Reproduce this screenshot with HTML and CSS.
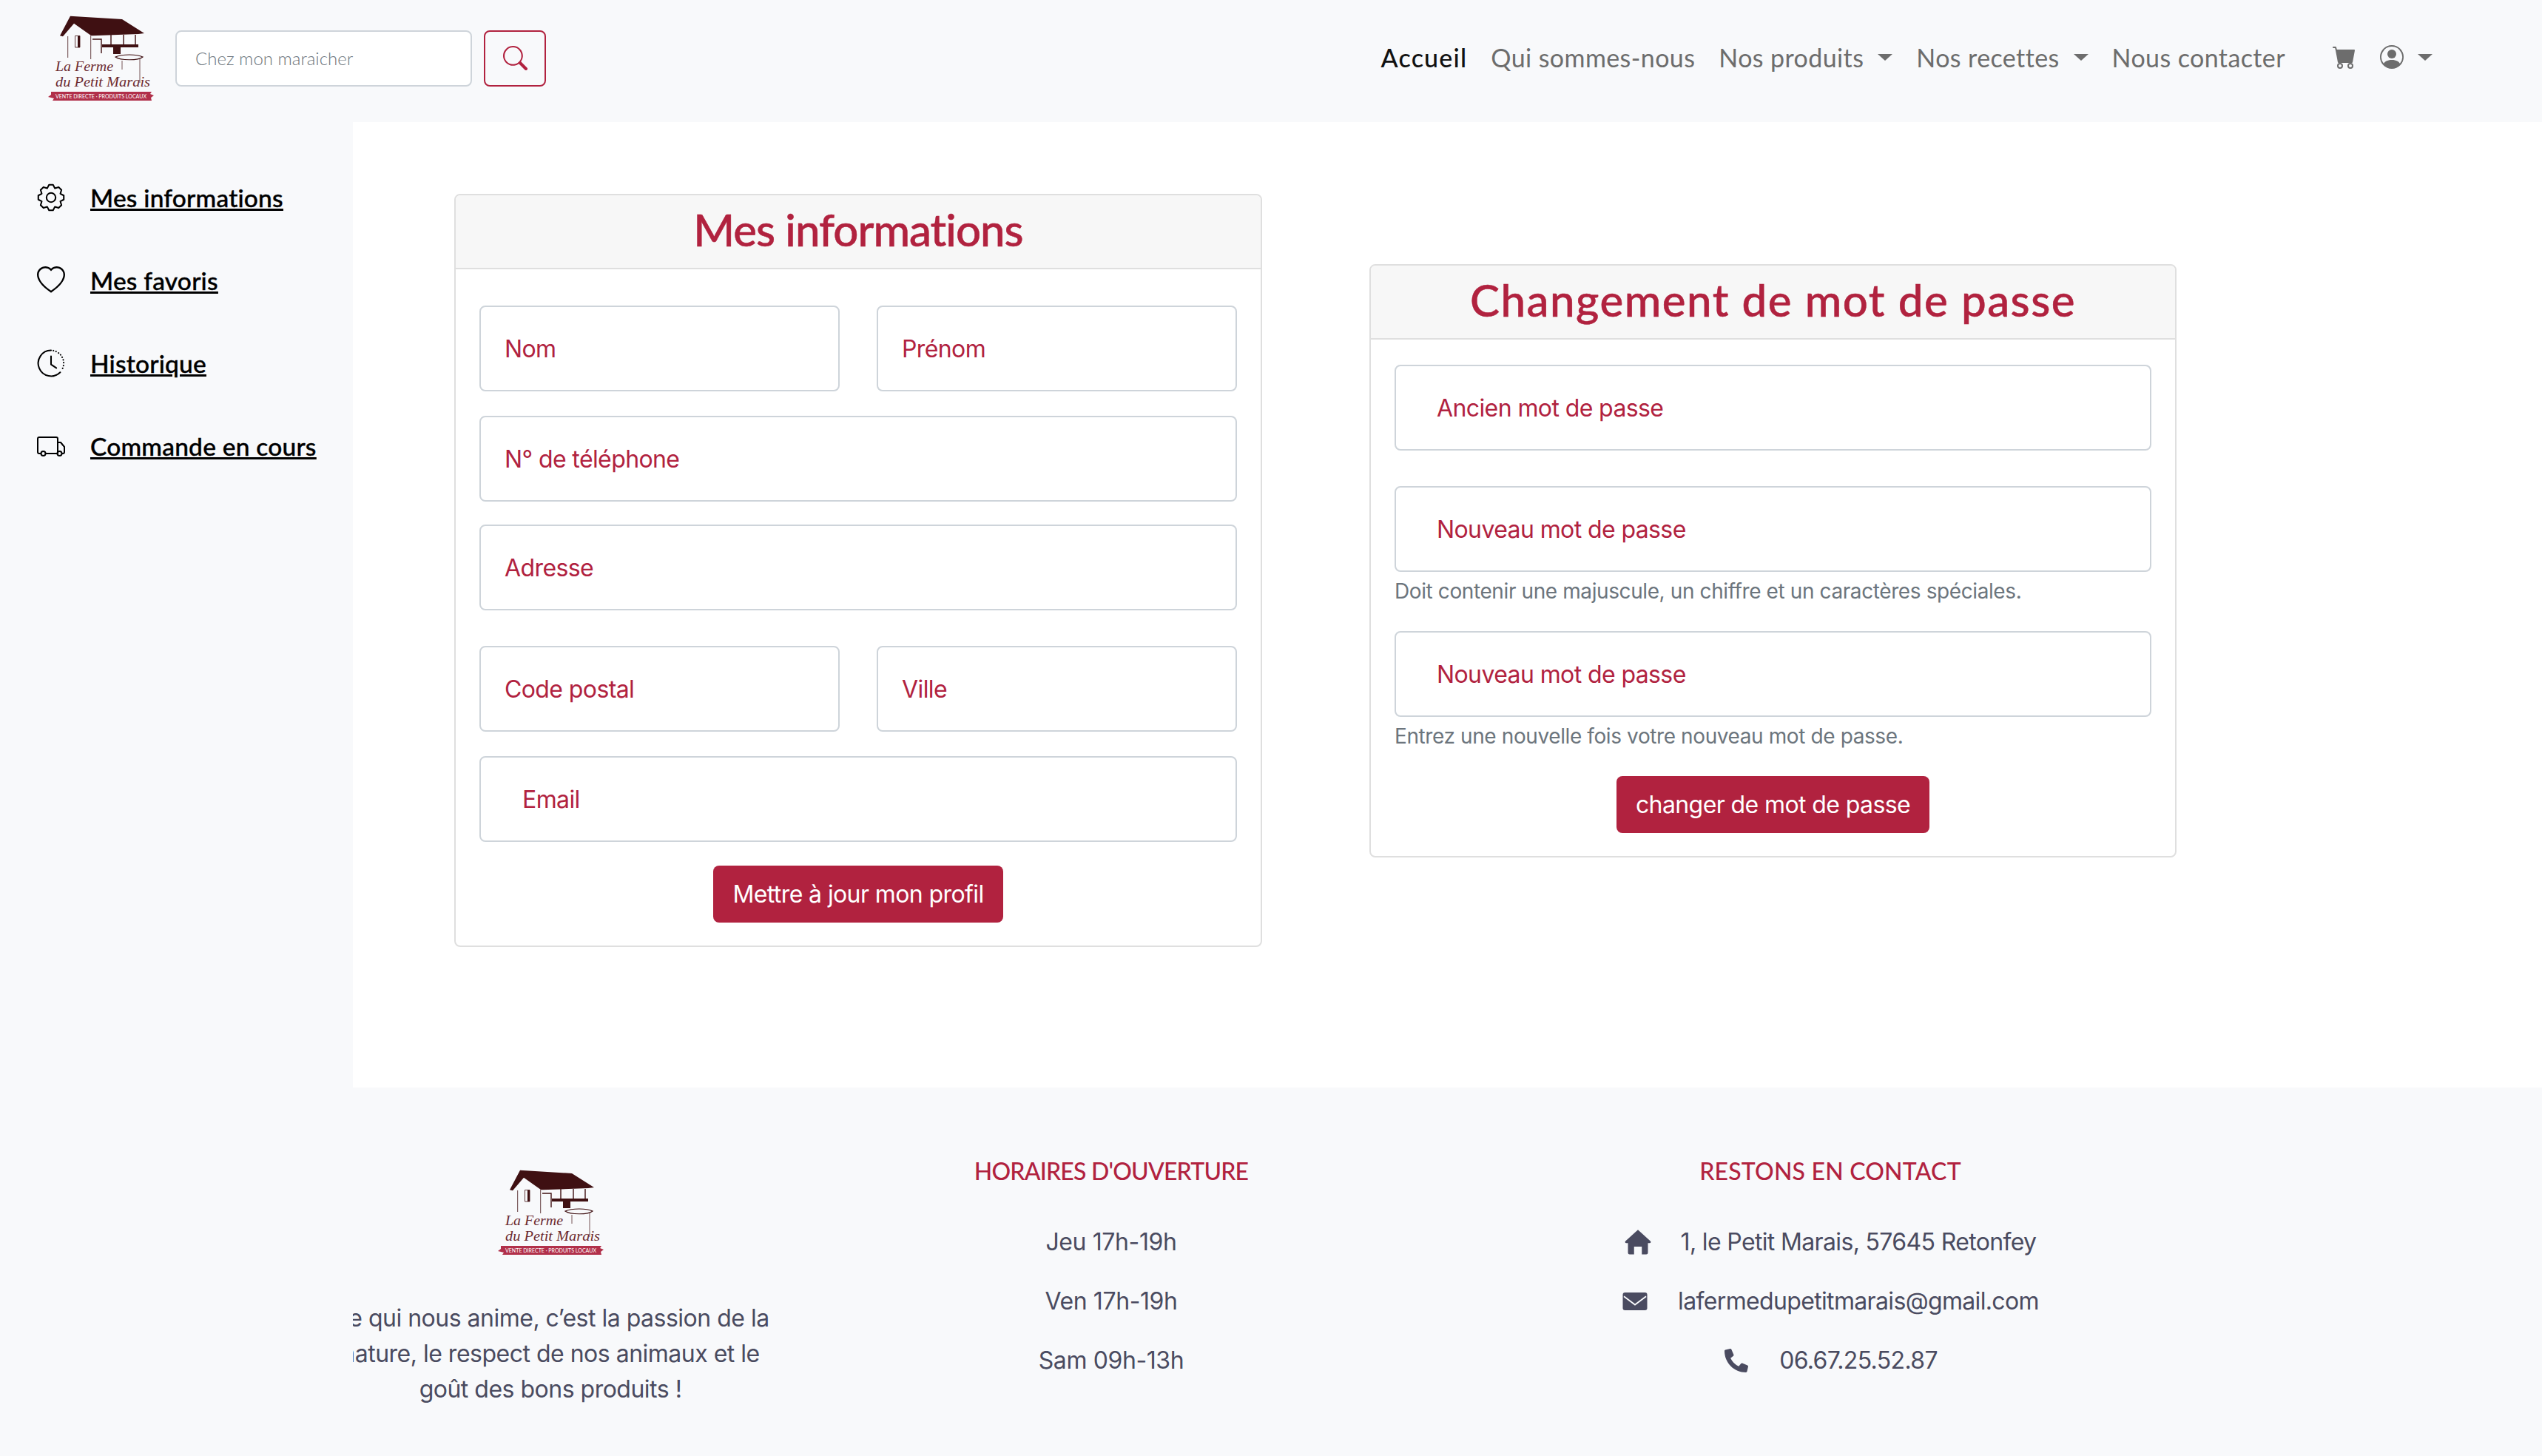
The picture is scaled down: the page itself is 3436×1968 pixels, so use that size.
FILE: index.html
```html
<!DOCTYPE html>
<html lang="fr">
<head>
  <meta charset="UTF-8" />
  <title>Mes informations - La Ferme du Petit Marais</title>
  <meta name="viewport" content="width=device-width, initial-scale=1" />
  <link rel="stylesheet" href="styles.css">
</head>
<body>
  <svg class="sprites" aria-hidden="true">
    <symbol id="logo" viewBox="0 0 143 117">
      <path fill="#3f1012" d="M30 1.7 100 6 130 25 122 26 60 28.3 58 28 35 11.7 20 29.3 16 28.3Z"/>
      <g fill="none" stroke="#3f1012">
        <path stroke-width=".8" d="M26.7 29V58M57.7 28V60M36.5 28.5H43V44H36.5Z"/>
        <path stroke-width="1.4" d="M85 27V40M102 27V40M118 27V42M60 33H72V52"/>
        <path stroke-width="1.2" d="M91 57C100 53 120 53 128 57 122 62 98 62 91 57Z"/>
        <path stroke-width=".7" d="M124 60V92M100 62V74"/>
      </g>
      <path fill="#3f1012" d="M40 28.5H43V44H40ZM73 40H122V44H98V53H88V44H73Z"/>
      <text class="logo-script" x="10" y="76" textLength="78" lengthAdjust="spacingAndGlyphs">La Ferme</text>
      <text class="logo-script" x="10" y="97" textLength="128" lengthAdjust="spacingAndGlyphs">du Petit Marais</text>
      <path fill="#b1304a" d="M4 104H140L138 107 143 109 139 112 140 116H6L8 113 0 111 4 108Z"/>
      <text class="logo-banner" x="10" y="113" textLength="123" lengthAdjust="spacingAndGlyphs">VENTE DIRECTE · PRODUITS LOCAUX</text>
    </symbol>
  </svg>

  <header class="topbar">
    <svg class="logo"><use href="#logo"/></svg>
    <form class="search">
      <div class="search-input">Chez mon maraicher</div>
      <button class="search-btn" type="button" aria-label="Rechercher">
        <svg viewBox="0 0 16 16" fill="currentColor"><path d="M11.742 10.344a6.5 6.5 0 1 0-1.397 1.398h-.001c.03.04.062.078.098.115l3.85 3.85a1 1 0 0 0 1.415-1.414l-3.85-3.85a1.007 1.007 0 0 0-.115-.1zM12 6.5a5.5 5.5 0 1 1-11 0 5.5 5.5 0 0 1 11 0z"/></svg>
      </button>
    </form>
    <nav class="topnav">
      <a class="active" href="#">Accueil</a>
      <a href="#">Qui sommes-nous</a>
      <a class="caret" href="#">Nos produits</a>
      <a class="caret" href="#">Nos recettes</a>
      <a href="#">Nous contacter</a>
      <a class="icon-link cart" href="#" aria-label="Panier">
        <svg viewBox="0 0 16 16" fill="currentColor"><path d="M0 1.5A.5.5 0 0 1 .5 1H2a.5.5 0 0 1 .485.379L2.89 3H14.5a.5.5 0 0 1 .491.592l-1.5 8A.5.5 0 0 1 13 12H4a.5.5 0 0 1-.491-.408L2.01 3.607 1.61 2H.5a.5.5 0 0 1-.5-.5zM5 12a2 2 0 1 0 0 4 2 2 0 0 0 0-4zm7 0a2 2 0 1 0 0 4 2 2 0 0 0 0-4zm-7 1a1 1 0 1 1 0 2 1 1 0 0 1 0-2zm7 0a1 1 0 1 1 0 2 1 1 0 0 1 0-2z"/></svg>
      </a>
      <a class="icon-link caret user" href="#" aria-label="Compte">
        <svg viewBox="0 0 16 16" fill="currentColor"><path d="M11 6a3 3 0 1 1-6 0 3 3 0 0 1 6 0z"/><path fill-rule="evenodd" d="M0 8a8 8 0 1 1 16 0A8 8 0 0 1 0 8zm8-7a7 7 0 0 0-5.468 11.37C3.242 11.226 4.805 10 8 10s4.757 1.225 5.468 2.37A7 7 0 0 0 8 1z"/></svg>
      </a>
    </nav>
  </header>

  <div class="page">
    <aside class="sidebar">
      <a class="side-link" href="#">
        <svg viewBox="0 0 24 24" fill="none" stroke="currentColor" stroke-width="1.3" stroke-linejoin="round"><path d="M10.28 1.14 13.72 1.14 15.29 4.05 18.47 3.1 20.9 5.53 19.95 8.71 22.87 10.28 22.87 13.72 19.95 15.29 20.9 18.47 18.47 20.9 15.29 19.95 13.72 22.87 10.28 22.87 8.71 19.95 5.53 20.9 3.1 18.47 4.05 15.29 1.13 13.72 1.13 10.28 4.05 8.71 3.1 5.53 5.53 3.1 8.71 4.05Z"/><circle cx="12" cy="12" r="3.9"/></svg>
        <span>Mes informations</span>
      </a>
      <a class="side-link" href="#">
        <svg viewBox="0 0 16 16" fill="currentColor"><path d="m8 2.748-.717-.737C5.6.281 2.514.878 1.4 3.053c-.523 1.023-.641 2.5.314 4.385.92 1.815 2.834 3.989 6.286 6.357 3.452-2.368 5.365-4.542 6.286-6.357.955-1.886.838-3.362.314-4.385C13.486.878 10.4.28 8.717 2.01L8 2.748zM8 15C-7.333 4.868 3.279-3.04 7.824 1.143c.06.055.119.112.176.171a3.12 3.12 0 0 1 .176-.17C12.72-3.042 23.333 4.867 8 15z"/></svg>
        <span>Mes favoris</span>
      </a>
      <a class="side-link" href="#">
        <svg viewBox="0 0 24 24" fill="none" stroke="currentColor" stroke-width="1.3" stroke-linecap="round" stroke-linejoin="round"><path d="M12 1A11 11 0 1 0 19.8 19.8"/><path stroke-dasharray="0.1 2.3" d="M14 1.2A11 11 0 0 1 21 18"/><path d="M12 6V13L16.5 16"/></svg>
        <span>Historique</span>
      </a>
      <a class="side-link" href="#">
        <svg viewBox="0 0 38 28" fill="none" stroke="currentColor" stroke-width="2" stroke-linejoin="round"><path d="M5 24H3A2 2 0 0 1 1 22V4A2 2 0 0 1 3 2H26A2 2 0 0 1 28 4V24H12M28 9H32L37 15V22A2 2 0 0 1 35 24H34M28 24H27"/><circle cx="8.500" cy="24" r="3"/><circle cx="30.500" cy="24" r="3"/></svg>
        <span>Commande en cours</span>
      </a>
    </aside>

    <main class="content">
      <section class="card card-profile">
        <h2 class="card-title">Mes informations</h2>
        <form class="card-body">
          <div class="row gap-a">
            <div class="field">Nom</div>
            <div class="field">Prénom</div>
          </div>
          <div class="field gap-b">N° de téléphone</div>
          <div class="field gap-c">Adresse</div>
          <div class="row gap-d">
            <div class="field">Code postal</div>
            <div class="field">Ville</div>
          </div>
          <div class="field field-email gap-e">Email</div>
          <button class="btn" type="button">Mettre à jour mon profil</button>
        </form>
      </section>

      <section class="card card-password">
        <h2 class="card-title">Changement de mot de passe</h2>
        <form class="card-body">
          <div class="field field-wide gap-f">Ancien mot de passe</div>
          <div class="field field-wide">Nouveau mot de passe</div>
          <p class="help">Doit contenir une majuscule, un chiffre et un caractères spéciales.</p>
          <div class="field field-wide">Nouveau mot de passe</div>
          <p class="help">Entrez une nouvelle fois votre nouveau mot de passe.</p>
          <button class="btn" type="button">changer de mot de passe</button>
        </form>
      </section>
    </main>
  </div>

  <footer class="footer">
    <div class="foot-brand">
      <svg class="logo"><use href="#logo"/></svg>
      <p>Ce qui nous anime, c’est la passion de la nature, le respect de nos animaux et le goût des bons produits !</p>
    </div>
    <div class="foot-hours">
      <h3>HORAIRES D'OUVERTURE</h3>
      <p>Jeu 17h-19h</p>
      <p>Ven 17h-19h</p>
      <p>Sam 09h-13h</p>
    </div>
    <div class="foot-contact">
      <h3>RESTONS EN CONTACT</h3>
      <p>
        <svg viewBox="0 0 24 24" fill="currentColor"><path d="M12 .8 23.2 11a1 1 0 0 1-.7 1.8H21V21.500A1.500 1.500 0 0 1 19.500 23H15.500V16H8.500V23H4.500A1.500 1.500 0 0 1 3 21.500V12.800H1.500A1 1 0 0 1 .8 11Z"/></svg>
        <span>1, le Petit Marais, 57645 Retonfey</span>
      </p>
      <p>
        <svg viewBox="0 0 24 24"><rect x="1" y="4" width="22" height="16" rx="2" fill="currentColor"/><path d="M2 7.500 12 15 22 7.500" fill="none" stroke="#f8f9fb" stroke-width="1.300"/></svg>
        <span>lafermedupetitmarais@gmail.com</span>
      </p>
      <p>
        <svg viewBox="-32 -32 576 576" fill="currentColor"><path d="M497.39 361.8l-112-48a24 24 0 0 0-28 6.9l-49.6 60.6A370.66 370.66 0 0 1 130.6 204.11l60.6-49.6a23.94 23.94 0 0 0 6.9-28l-48-112A24.16 24.16 0 0 0 122.6.61l-104 24A24 24 0 0 0 0 48c0 256.5 207.9 464 464 464a24 24 0 0 0 23.4-18.6l24-104a24.29 24.29 0 0 0-14.01-27.6z"/></svg>
        <span>06.67.25.52.87</span>
      </p>
    </div>
  </footer>
</body>
</html>
```

FILE: styles.css
```css
/* Reset and base */
*, *::before, *::after {
  box-sizing: border-box;
}

body {
  font-family: 'Inter', 'Liberation Sans', sans-serif;
  background-color: #f8f9fb;
  color: #4a4b60;
  margin: 0;
  height: 1968px;
  overflow: hidden;
  font-size: 32px;
  letter-spacing: -0.6px;
}

a {
  color: inherit;
}

.sprites {
  display: none;
}

.logo-script {
  font-family: 'Liberation Serif', serif;
  font-style: italic;
  font-size: 19px;
  letter-spacing: 0;
  fill: #6b2a30;
}

.logo-banner {
  font-family: 'Lato', sans-serif;
  font-size: 8px;
  letter-spacing: 0;
  fill: #fff;
}

/* Top bar */
.topbar {
  height: 165px;
  display: flex;
  align-items: center;
  padding: 0 148px 8px 65px;
}

.logo {
  width: 143px;
  height: 117px;
  display: block;
}

.search {
  display: flex;
  gap: 16px;
  margin-left: 29px;
}

.search-input {
  width: 401px;
  height: 76px;
  background-color: #fff;
  border: 2px solid #ced4da;
  border-radius: 8px;
  padding: 0 25px;
  display: flex;
  align-items: center;
  font-family: 'Lato', sans-serif;
  font-weight: 300;
  font-size: 24px;
  letter-spacing: 0;
  color: #6c757d;
}

.search-btn {
  width: 84px;
  height: 76px;
  background: none;
  border: 2px solid #b1223f;
  border-radius: 8px;
  color: #b1223f;
  padding: 0;
  display: flex;
  align-items: center;
  justify-content: center;
}

.search-btn svg {
  width: 33px;
  height: 33px;
}

.topnav {
  margin-left: auto;
  margin-bottom: 3px;
  display: flex;
  align-items: center;
  font-family: 'Lato', sans-serif;
  font-size: 34px;
  letter-spacing: 0.4px;
  color: #6d6d6d;
}

.topnav a {
  text-decoration: none;
  margin-left: 32px;
  display: flex;
  align-items: center;
}

.topnav a.active {
  color: #111;
  font-weight: 500;
  letter-spacing: 1.2px;
}

.caret::after {
  content: '';
  margin-left: 19px;
  border-top: 9px solid currentColor;
  border-left: 10px solid transparent;
  border-right: 10px solid transparent;
}

.topnav .cart {
  margin-left: 64px;
}

.icon-link svg {
  width: 32px;
  height: 32px;
}

/* Sidebar and main */
.page {
  display: flex;
  height: 1305px;
}

.sidebar {
  width: 477px;
  flex-shrink: 0;
  padding: 74px 0 0 50px;
  display: flex;
  flex-direction: column;
  gap: 56px;
}

.side-link {
  display: flex;
  align-items: center;
  height: 56px;
  gap: 34px;
  color: #000;
  font-family: 'Lato', sans-serif;
  font-weight: 500;
  font-size: 33.5px;
  letter-spacing: 0.2px;
  text-decoration-thickness: 3px;
  -webkit-text-stroke: 0.4px #000;
}

.side-link span {
  text-decoration: underline;
  text-decoration-thickness: 3px;
}

.side-link svg {
  width: 38px;
  height: 38px;
  flex-shrink: 0;
}

.content {
  flex-grow: 1;
  background-color: #fff;
  display: flex;
  align-items: flex-start;
}

/* Cards */
.card {
  width: 1091px;
  border: 2px solid #dfdfdf;
  border-radius: 8px;
}

.card-profile {
  width: 1092px;
  margin: 97px 0 0 137px;
}

.card-password {
  margin: 192px 0 0 145px;
}

.card-title {
  height: 100px;
  margin: 0;
  padding-bottom: 6px;
  background-color: #f7f7f7;
  border-bottom: 2px solid #dfdfdf;
  border-radius: 6px 6px 0 0;
  display: flex;
  align-items: center;
  justify-content: center;
  font-family: 'Lato', sans-serif;
  font-weight: 500;
  font-size: 60px;
  -webkit-text-stroke: 0.5px #b1223f;
  color: #b1223f;
}

.card-profile .card-title {
  letter-spacing: -1px;
}

.card-password .card-title {
  letter-spacing: 1.5px;
}

.card-body {
  padding: 0 32px 31px;
  display: flex;
  flex-direction: column;
  align-items: stretch;
}

.card-profile .card-body {
  padding-top: 49px;
}

.card-password .card-body {
  padding-top: 34px;
}

.row {
  display: flex;
  gap: 50px;
}

.row .field {
  flex: 1;
}

.field {
  height: 116px;
  background-color: #fff;
  border: 2px solid #ced4da;
  border-radius: 8px;
  padding: 0 32px;
  display: flex;
  align-items: center;
  color: #b1223f;
  font-size: 32px;
}

.field-email {
  padding-left: 56px;
}

.field-wide {
  padding-left: 55px;
}

.gap-a { margin-bottom: 33px; }
.gap-b { margin-bottom: 31px; }
.gap-c { margin-bottom: 48px; }
.gap-d { margin-bottom: 33px; }
.gap-e { margin-bottom: 32px; }
.gap-f { margin-bottom: 48px; }

.help {
  margin: 0;
  height: 80px;
  padding-top: 7px;
  line-height: 38px;
  font-size: 28px;
  letter-spacing: -0.4px;
  color: #6c757d;
}

.btn {
  align-self: center;
  height: 77px;
  padding: 0 26px;
  background-color: #b1223f;
  color: #fff;
  border: none;
  border-radius: 8px;
  font-family: 'Inter', sans-serif;
  font-size: 32px;
  letter-spacing: -0.6px;
}

/* Footer */
.footer {
  height: 498px;
  display: flex;
  padding-left: 477px;
}

.footer p {
  margin: 0;
}

.footer h3 {
  margin: 0 0 45px;
  height: 54px;
  line-height: 54px;
  font-family: 'Lato', sans-serif;
  font-weight: 500;
  font-size: 32px;
  letter-spacing: 0.2px;
  color: #b1223f;
}

.foot-brand {
  width: 585px;
  padding-top: 110px;
  overflow: hidden;
  text-align: center;
}

.foot-brand .logo {
  margin: 0 0 0 196px;
}

.foot-brand p {
  width: 612px;
  margin: 61px 0 0 -39px;
  line-height: 48px;
  letter-spacing: -0.5px;
}

.foot-hours,
.foot-contact {
  padding-top: 86px;
  text-align: center;
}

.foot-hours {
  width: 600px;
  margin-left: 140px;
  letter-spacing: -0.4px;
}

.foot-hours h3 {
  letter-spacing: -0.8px;
}

.foot-contact {
  width: 800px;
  margin-left: 272px;
  letter-spacing: -0.65px;
}

.foot-hours p,
.foot-contact p {
  height: 80px;
  line-height: 48px;
  display: flex;
  justify-content: center;
}

.foot-contact svg {
  width: 36px;
  height: 36px;
  margin: 6px 40px 0 0;
}
```
